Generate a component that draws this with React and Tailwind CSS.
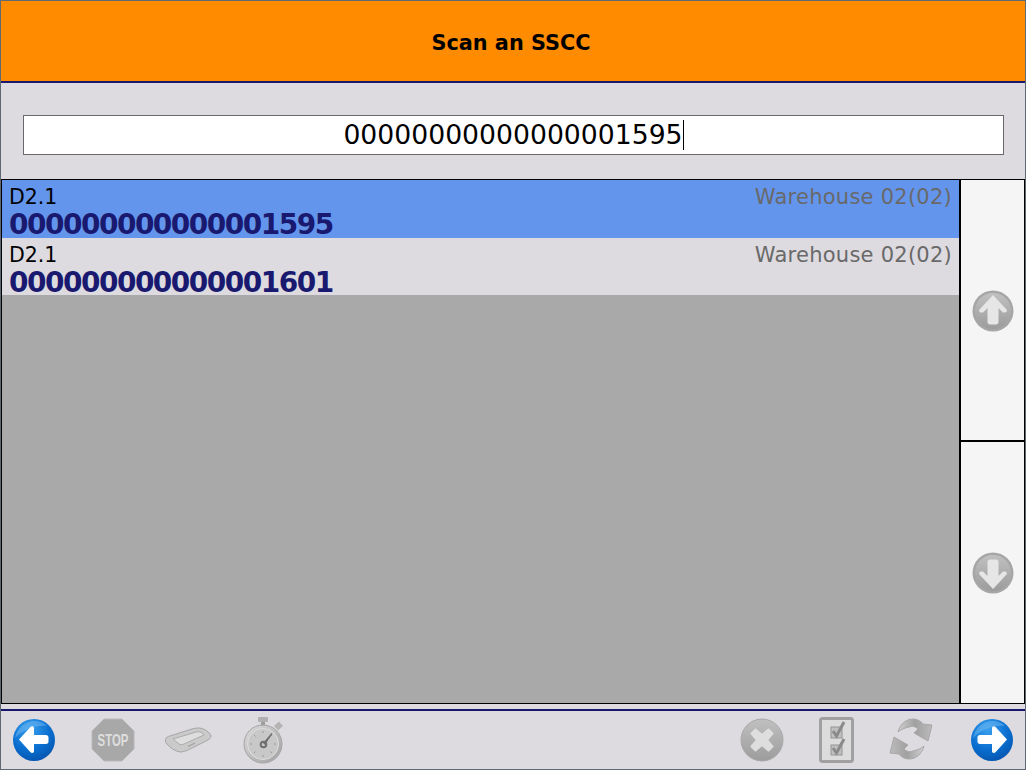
import React from 'react';

const rows = [
  { id: '000000000000001595', selected: true },
  { id: '000000000000001601', selected: false },
];

const Defs = () => (
  <svg width="0" height="0" className="absolute">
    <defs>
      <radialGradient id="blueBall" cx="40%" cy="25%" r="85%">
        <stop offset="0%" stopColor="#3aa0ee" />
        <stop offset="55%" stopColor="#0a6fd0" />
        <stop offset="100%" stopColor="#0450a8" />
      </radialGradient>
      <linearGradient id="grayBall" x1="0" y1="0" x2="0" y2="1">
        <stop offset="0%" stopColor="#c0c0c0" />
        <stop offset="100%" stopColor="#9c9c9c" />
      </linearGradient>
      <linearGradient id="grayBody" x1="0" y1="0" x2="1" y2="1">
        <stop offset="0%" stopColor="#dcdcdc" />
        <stop offset="100%" stopColor="#a0a0a0" />
      </linearGradient>
      <linearGradient id="grayArrow" x1="0" y1="0" x2="1" y2="0">
        <stop offset="0%" stopColor="#d0d0d0" />
        <stop offset="50%" stopColor="#a0a0a0" />
        <stop offset="100%" stopColor="#bcbcbc" />
      </linearGradient>
    </defs>
  </svg>
);

const BlueArrow = ({ flip }) => (
  <svg width="44" height="44" viewBox="0 0 44 44">
    <circle cx="22" cy="22" r="21" fill="url(#blueBall)" />
    <path d="M3 20C5 10 13 3 22 3c6 0 10 2 13 5C24 7 12 11 3 20z" fill="#7cc0f4" opacity="0.45" />
    <g transform={flip ? 'matrix(-1 0 0 1 44 0)' : undefined}>
      <path
        d="M7 21.500 18.500 9c1.500-1.500 3.500-.8 3.500 1.200V17h12c1.500 0 2.500 1 2.500 2.500v4c0 1.500-1 2.500-2.500 2.500H22v7c0 2-2 2.700-3.500 1.200z"
        fill="#fff"
      />
    </g>
  </svg>
);

const ScrollIcon = ({ down }) => (
  <svg width="42" height="42" viewBox="0 0 42 42">
    <circle cx="21" cy="21" r="20.500" fill="#a6a6a6" />
    <circle cx="21" cy="21" r="18" fill="url(#grayBall)" />
    <g transform={down ? 'matrix(1 0 0 -1 0 42)' : undefined}>
      <path
        d="M21 5 34.500 19.500c1 1.500 0 3-1.500 3h-2L26.500 18v14c0 1.500-1 2.500-2.500 2.500h-6c-1.500 0-2.500-1-2.500-2.500V18L11 22.500H9c-1.500 0-2.500-1.500-1.500-3z"
        fill="#e6e6e6"
      />
    </g>
  </svg>
);

const StopIcon = () => (
  <svg width="44" height="44" viewBox="0 0 44 44">
    <path d="M13 1h18l12 12v18L31 43H13L1 31V13z" fill="#a8a8a8" stroke="#b8b8b8" />
    <text
      transform="translate(22 27.700) scale(0.95 1.350)"
      textAnchor="middle"
      fontFamily="'Liberation Sans', sans-serif"
      fontWeight="700"
      fontSize="12"
      fill="#dedede"
    >
      STOP
    </text>
  </svg>
);

const ScannerIcon = () => (
  <svg width="54" height="36" viewBox="0 0 54 36">
    <path
      d="M6 16C5 18 5 20 7 22c3 4 8 7 13 8 3 0 6-1 10-3l18-9c3-2 4-4 2-6-2-3-6-5-10-6-3 0-5 0-8 1L10 14c-2 .5-3 1-4 2z"
      fill="#cacaca"
      stroke="#a6a6a6"
    />
    <path d="M13 17 36 10c2-.5 5 0 6 1l2 2-20 9c-2 1-4 1-5 0z" fill="#dedede" stroke="#ababab" />
    <path d="M28 24.500 35 21" stroke="#969696" />
  </svg>
);

const WatchIcon = () => (
  <svg width="54" height="54" viewBox="0 1 54 54">
    <rect x="19" y="5" width="10" height="5" rx="1" fill="#b0b0b0" />
    <rect x="22" y="10" width="4" height="4" fill="#9c9c9c" />
    <path d="m35 14 5-4.500 4 4.500-5 4.500z" fill="#b4b4b4" />
    <circle cx="24" cy="32" r="19" fill="url(#grayBody)" stroke="#a4a4a4" />
    <circle cx="24" cy="32" r="15.500" fill="#c8c8c8" stroke="#dedede" />
    <path d="M24 19v2M24 43v2M11 32h2M35 32h2M15 23l1.500 1.500M31.500 39.500 33 41M15 41l1.500-1.500M31.500 24.500 33 23" stroke="#989898" />
    <path d="m24 31 8.500-10 1 .7L26 33z" fill="#707070" />
    <circle cx="24.500" cy="32.500" r="2.800" fill="none" stroke="#707070" strokeWidth="2" />
  </svg>
);

const CancelIcon = () => (
  <svg width="44" height="44" viewBox="0 0 44 44">
    <circle cx="22" cy="22" r="21" fill="url(#grayBall)" stroke="#a8a8a8" />
    <path d="M11.500 15.500 15.500 11.500 22 17l6.500-5.500 4 4L27 22l5.500 6.500-4 4L22 27l-6.500 5.500-4-4L17 22z" fill="#dedede" stroke="#dedede" strokeWidth="2" strokeLinejoin="round" />
  </svg>
);

const ChecklistIcon = () => (
  <svg width="54" height="54" viewBox="0 1 54 54">
    <rect x="10.500" y="6.500" width="32" height="43" rx="2" fill="#dcdcdc" stroke="#a0a0a0" strokeWidth="3" />
    <rect x="21" y="15" width="11" height="11" fill="#c0c0c0" stroke="#949494" />
    <rect x="21" y="33" width="11" height="10" fill="#c0c0c0" stroke="#949494" />
    <path d="m23 19 3.500 5L34 10M23 36l3.500 5L34 27" fill="none" stroke="#8a8a8a" strokeWidth="3" />
  </svg>
);

const RefreshIcon = () => (
  <svg width="46" height="46" viewBox="4 5 46 46">
    <path
      d="M13 20c2-8 8-13 15-13 4 0 8 2 10 5l9 1-4 16-14-8 4-4c-3-3-6-3-9-2-5 1-9 3-11 5z"
      fill="url(#grayArrow)"
      stroke="#a8a8a8"
    />
    <path
      transform="rotate(180 26 27)"
      d="M13 20c2-8 8-13 15-13 4 0 8 2 10 5l9 1-4 16-14-8 4-4c-3-3-6-3-9-2-5 1-9 3-11 5z"
      fill="url(#grayArrow)"
      stroke="#a8a8a8"
    />
  </svg>
);

const App = () => {
  return (
    <div className="w-[1026px] h-[770px] flex flex-col overflow-hidden bg-[#dddbe0] border border-[#5f6973] font-['DejaVu_Sans',sans-serif]">
      <Defs />
      <header className="h-[82px] shrink-0 flex items-center justify-center pt-[5px] pr-[4px] bg-[#ff8c00] border-b-2 border-[#191970]">
        <h1 className="text-[20.800px] font-bold text-black">Scan an SSCC</h1>
      </header>

      <div className="h-[96px] shrink-0 pt-[32px] pl-[22px] pr-[21px]">
        <div className="w-full h-[40px] flex items-center justify-center bg-white border border-[#696969] text-[26.670px] text-black">
          <span>00000000000000001595</span>
          <span className="w-px h-[30px] bg-black" />
        </div>
      </div>

      <main className="h-[525px] shrink-0 flex border border-black border-l-0 border-r-0">
        <ul className="flex-1 flex flex-col bg-[#a9a9a9] border-l border-black">
          {rows.map((row) => (
            <li
              key={row.id}
              className={`h-[57.500px] pl-[7px] pr-[7px] pt-[5px] ${row.selected ? 'bg-[#6495ed]' : 'bg-[#dddbe0]'}`}
            >
              <div className="flex justify-between items-baseline h-[24px] text-[20.500px] leading-[24px]">
                <span className="text-black">D2.1</span>
                <span className="text-[21px] tracking-[0.25px] text-[#696969]">Warehouse 02(02)</span>
              </div>
              <div className="mt-[2px] text-[28px] leading-[28px] tracking-[-1.500px] font-bold text-[#191970]">{row.id}</div>
            </li>
          ))}
        </ul>
        <div className="w-[66px] shrink-0 flex flex-col bg-[#f5f5f5] border-l-2 border-r border-black">
          <button className="h-[262px] flex items-center justify-center pt-[2px] border-b-2 border-black">
            <ScrollIcon />
          </button>
          <button className="flex-1 flex items-center justify-center">
            <ScrollIcon down />
          </button>
        </div>
      </main>

      <footer className="mt-[5px] flex-1 flex items-center justify-between border-t-2 border-[#191970] px-[11px]">
        <div className="flex items-center">
          <div className="w-[44px]"><BlueArrow /></div>
          <div className="ml-[35px] w-[44px]"><StopIcon /></div>
          <div className="ml-[25px] w-[54px]"><ScannerIcon /></div>
          <div className="ml-[25px] w-[54px]"><WatchIcon /></div>
        </div>
        <div className="flex items-center">
          <div className="w-[44px]"><CancelIcon /></div>
          <div className="ml-[26px] w-[54px]"><ChecklistIcon /></div>
          <div className="ml-[25px] w-[46px]"><RefreshIcon /></div>
          <div className="ml-[35px] w-[44px]"><BlueArrow flip /></div>
        </div>
      </footer>
    </div>
  );
};

export default App;
